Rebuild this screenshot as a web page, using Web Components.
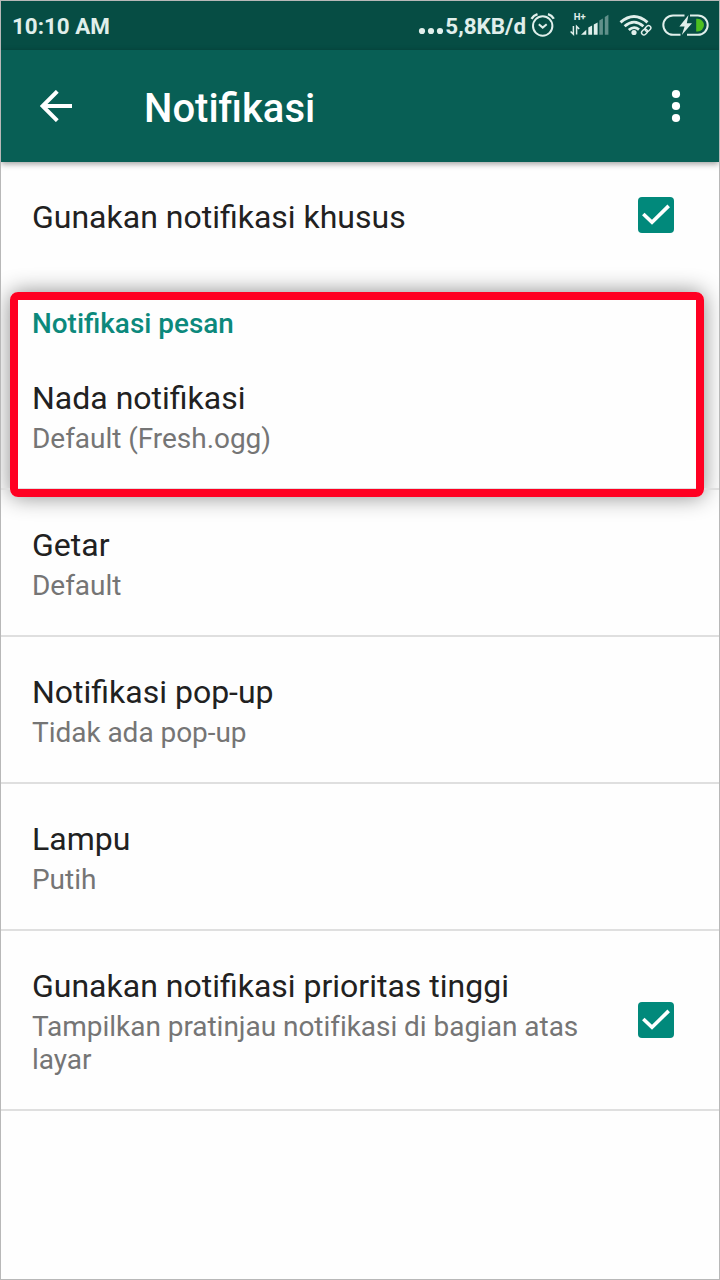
<!DOCTYPE html>
<html lang="id">
<head>
<meta charset="utf-8">
<title>Notifikasi</title>
<style>
html,body{margin:0;height:100%;overflow:hidden}
body{font-family:Roboto,"Noto Sans",sans-serif;background:#fefefe}
</style>
</head>
<body>
<settings-screen></settings-screen>
<script>
function define(name, markup) {
  const t = document.createElement('template');
  t.innerHTML = markup;
  customElements.define(name, class extends HTMLElement {
    constructor() {
      super();
      this.attachShadow({mode: 'open'}).append(t.content.cloneNode(true));
    }
  });
}

define('status-bar', `
<style>
:host{display:flex;align-items:center;height:49px;background:#064d44;color:#e0efeb;padding:0 9px 0 11px;font-weight:700;font-size:22.4px;line-height:49px;white-space:nowrap}
.time{flex:1}
.time,.rate{padding-top:2px}
svg{display:block;flex:none}
.dots{margin:11px 1px 0 0}
text{font:700 9.5px Roboto,sans-serif;fill:#e0efeb;stroke:none}
</style>
<span class="time">10:10 AM</span>
<svg class="dots" width="26" height="8"><g fill="#e0efeb"><circle cx="4" cy="4" r="3.1"/><circle cx="13" cy="4" r="3.1"/><circle cx="22" cy="4" r="3.1"/></g></svg>
<span class="rate">5,8KB/d</span>
<svg class="icons" width="184" height="49" viewBox="526 1 184 49" fill="none" stroke="#e0efeb">
  <circle cx="542.7" cy="26" r="9.7" stroke-width="2"/>
  <path d="M538.8 24.2l3.9 3.4 4-3.4" stroke-width="2"/>
  <path d="M531.5 18.8Q533.5 15.5 537.5 14.2M548 14.2Q552 15.5 553.8 18.8" stroke-width="2.4"/>
  <text x="573.8" y="20">H+</text>
  <path d="M573.4 26v8.3l-2.8-2.8M576.6 34.6v-8.2l2.6 2.6" stroke-width="1.5"/>
  <g stroke="none" fill="#e0efeb">
    <path d="M581 34.8l5.3-5v5zM588.3 27.5l3.8-1.9v9.2h-3.8zM593.8 24.4l3.8-2v12.4h-3.8z"/>
    <path opacity=".42" d="M599.3 20.4l3.6-2v16.4h-3.6zM604.8 17l3.6-2.2v20h-3.6z"/>
    <circle cx="634" cy="32.5" r="2.6"/>
  </g>
  <path d="M620.5 22.4Q634 10.5 647.5 22.4M624.6 26.2Q634 18 643.4 26.2M628.8 30Q634 25.4 639 29.6" stroke-width="2.8"/>
  <g transform="rotate(-45 646 30.5)" stroke-width="1.4"><rect x="640.7" y="28.2" width="6.4" height="4.6" rx="2.3"/><rect x="645.5" y="28.2" width="6.4" height="4.6" rx="2.3"/></g>
  <path d="M684.5 15.4H673a9.7 9.7 0 0 0 0 19.4h7.5M690 15.4h8a9.7 9.7 0 0 1 0 19.4h-11" stroke-width="2"/>
  <path d="M696.2 18.8h1.5a6.2 6.2 0 0 1 0 12.6h-1.5z" fill="#4dbf20" stroke="none"/>
  <path d="M688.5 15L679.4 26.5h5.2L681.8 35 692 23.2h-5.2z" fill="#e0efeb" stroke="none"/>
</svg>
`);

define('app-bar', `
<style>
:host{display:flex;align-items:center;height:112px;box-sizing:border-box;background:#085f55;color:#fff;padding:0 38px 0 38px;box-shadow:0 2px 6px rgba(0,0,0,.38);position:relative}
h1{margin:5px 0 0 72px;flex:1;font-size:40px;font-weight:500;line-height:49px}
svg{display:block;flex:none}
</style>
<svg width="33" height="32" viewBox="39 90 33 32" fill="none" stroke="#fff" stroke-width="4"><path d="M72 106H43M57.3 91.3L42.6 106l14.7 14.7"/></svg>
<h1><slot></slot></h1>
<svg width="10" height="34" viewBox="671 89 10 34" fill="#fff" overflow="visible"><circle cx="676" cy="94" r="4.1"/><circle cx="676" cy="106" r="4.1"/><circle cx="676" cy="118" r="4.1"/></svg>
`);

define('check-box', `
<style>:host{display:block;width:36px;height:36px;flex:none}svg{display:block}</style>
<svg width="36" height="36"><rect width="36" height="36" rx="4" fill="#01897b"/><path d="M5.3 17l8.7 8.3L30.7 8.9" fill="none" stroke="#fff" stroke-width="3.6"/></svg>
`);

define('setting-row', `
<style>
:host{display:flex;align-items:center;justify-content:space-between;box-sizing:border-box;padding:35px 45px 33px 31px;border-bottom:2px solid #dfdfdf;color:#212121}
:host([plain]){border:0;padding-bottom:35px}
::slotted([slot=control]){margin-bottom:2px}
:host([plain]) ::slotted([slot=control]){margin-bottom:4px}
.title{font-size:32px;line-height:40px}
.text{max-width:570px}
::slotted([slot=summary]){display:block;margin-top:4px;font-size:28px;line-height:33px;color:#757575;letter-spacing:-.04px;font-variant-ligatures:common-ligatures}
</style>
<div class="text"><div class="title"><slot></slot></div><slot name="summary"></slot></div>
<slot name="control"></slot>
`);

define('section-title', `
<style>:host{display:block;padding:35px 31px 3px;font-size:27.9px;font-weight:500;line-height:33px;color:#0c897c}</style><slot></slot>
`);

define('highlight-frame', `
<style>
:host{display:block;position:relative}
.frame,.shade{position:absolute;left:9px;right:15px;top:20px;bottom:-7px;box-sizing:border-box;border-radius:8px}
.frame{border:8px solid #ff0022}
.shade{box-shadow:0 0 22px rgba(0,0,0,.46)}
.content{position:relative}
</style>
<div class="shade"></div><div class="content"><slot></slot></div><div class="frame"></div>
`);

define('settings-screen', `
<style>
:host{display:flex;flex-direction:column;width:720px;height:1280px;box-sizing:border-box;border:1px solid #b8b8b8;background:#fefefe;overflow:hidden}
app-bar{z-index:1}
</style>
<status-bar></status-bar>
<app-bar>Notifikasi</app-bar>
<setting-row plain>Gunakan notifikasi khusus<check-box slot="control"></check-box></setting-row>
<highlight-frame>
  <section-title>Notifikasi pesan</section-title>
  <setting-row>Nada notifikasi<span slot="summary">Default (Fresh.ogg)</span></setting-row>
</highlight-frame>
<setting-row>Getar<span slot="summary">Default</span></setting-row>
<setting-row>Notifikasi pop-up<span slot="summary">Tidak ada pop-up</span></setting-row>
<setting-row>Lampu<span slot="summary">Putih</span></setting-row>
<setting-row>Gunakan notifikasi prioritas tinggi<span slot="summary">Tampilkan pratinjau notifikasi di bagian atas layar</span><check-box slot="control"></check-box></setting-row>
`);
</script>
</body>
</html>
